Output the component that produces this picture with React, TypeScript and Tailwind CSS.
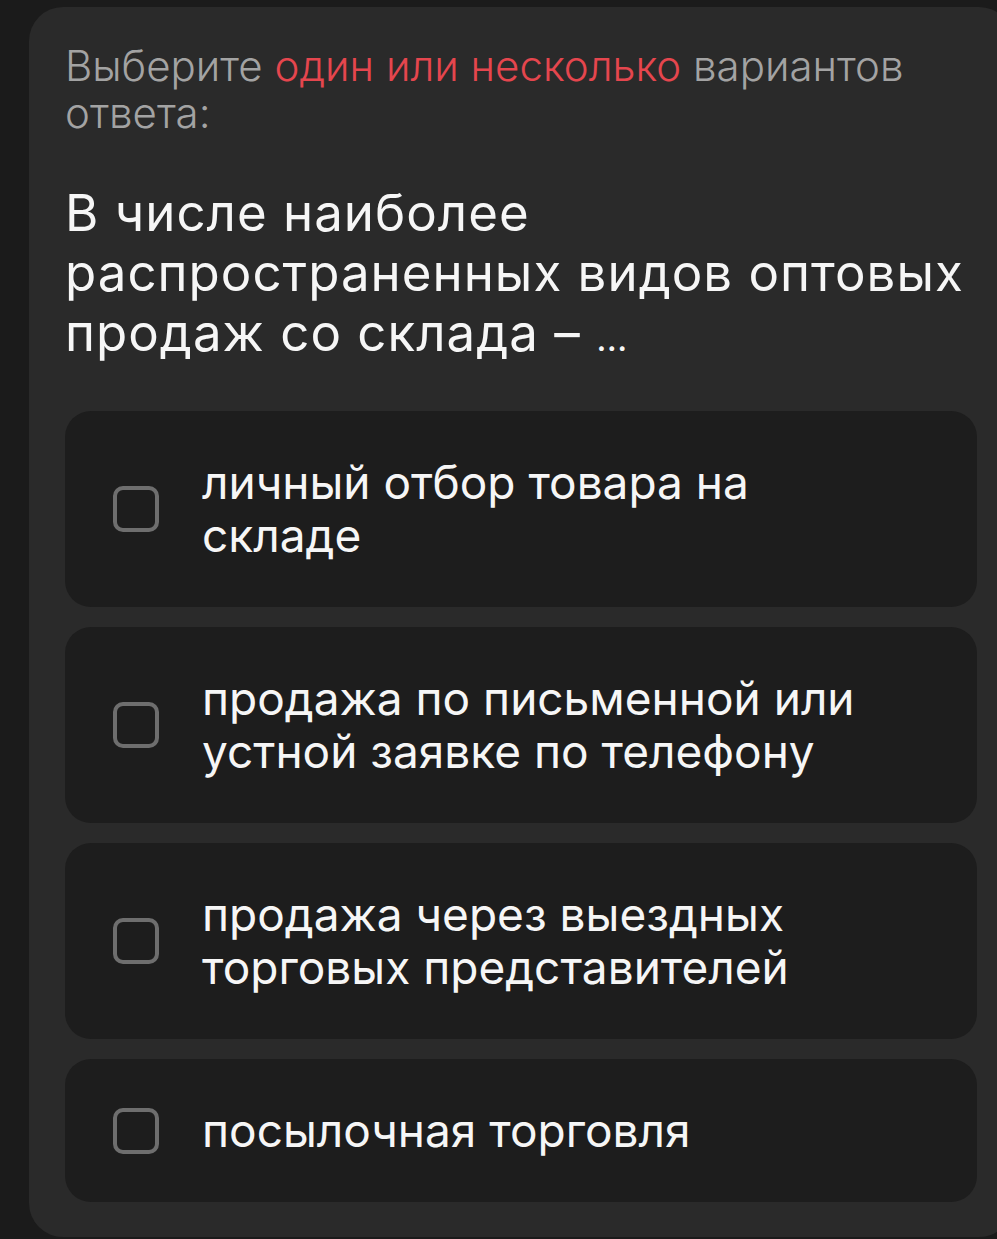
import React from 'react';

type Option = {
  id: number;
  lines: string[];
};

const options: Option[] = [
  { id: 1, lines: ['личный отбор товара на', 'складе'] },
  { id: 2, lines: ['продажа по письменной или', 'устной заявке по телефону'] },
  { id: 3, lines: ['продажа через выездных', 'торговых представителей'] },
  { id: 4, lines: ['посылочная торговля'] },
];

const OptionRow: React.FC<{ option: Option }> = ({ option }) => {
  return (
    <label className="flex items-center rounded-[26px] bg-[#1d1d1d] pl-[48px] pr-[40px] py-[45px] cursor-pointer">
      <span className="shrink-0 w-[46px] h-[46px] rounded-[10px] border-[4px] border-[#6e6e6e]" />
      <span className="ml-[43px] text-[46px] leading-[53px] text-[#f6f6f6] whitespace-nowrap">
        {option.lines.map((line, i) => (
          <span key={i} className="block">
            {line}
          </span>
        ))}
      </span>
    </label>
  );
};

const App: React.FC = () => {
  return (
    <div
      className="min-h-[1239px] bg-[#1b1b1b] overflow-hidden pt-[7px]"
      style={{ fontFamily: 'Inter, "Open Sans", sans-serif' }}
    >
      <div className="ml-[29px] mr-[-16px] rounded-[34px] bg-[#2a2a2a] pl-[36px] pr-[36px] pt-[35px] pb-[35px]">
        <p className="text-[42px] leading-[47px] font-light text-[#a3a3a3] whitespace-nowrap">
          Выберите <span className="text-[#e5464e]">один или несколько</span> вариантов
          <br />
          ответа:
        </p>

        <h1 className="mt-[47px] text-[51px] leading-[60px] font-normal tracking-[0.02em] text-[#f6f6f6] whitespace-nowrap">
          <span className="block">В числе наиболее</span>
          <span className="block">распространенных видов оптовых</span>
          <span className="block h-[60px]">
            продаж со склада – <span className="text-[36px] leading-none tracking-normal">…</span>
          </span>
        </h1>

        <div className="mt-[48px] flex flex-col gap-[20px]">
          {options.map((option) => (
            <OptionRow key={option.id} option={option} />
          ))}
        </div>
      </div>
    </div>
  );
};

export default App;
